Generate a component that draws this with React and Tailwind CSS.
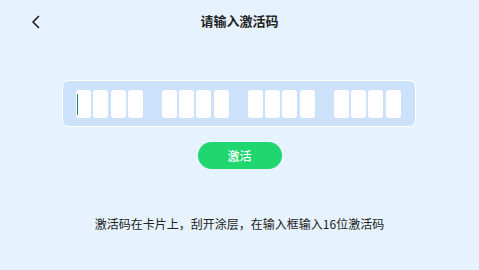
import React from "react";

const Box = ({ cursor }) => (
  <div className="relative w-[15px] h-[28px] rounded-[3px] bg-white">
    {cursor && <div className="absolute left-[0.5px] top-[4px] w-[1.5px] h-[21px] bg-[#168a78]" />}
  </div>
);

const Group = ({ first }) => (
  <div className="flex gap-[2.3px]">
    <Box cursor={first} />
    <Box />
    <Box />
    <Box />
  </div>
);

export default function App() {
  return (
    <div
      className="w-[479px] h-[270px] bg-[#e6f2fe] flex flex-col items-center relative overflow-hidden"
      style={{ fontFamily: '"Noto Sans CJK SC", "Noto Sans", sans-serif' }}
    >
      <div className="w-full h-[42px] flex items-center justify-center relative">
        <svg className="absolute left-[31px] top-[15px]" width="10" height="14" viewBox="0 0 10 14" fill="none">
          <path d="M7.5 1.5 L2 7 L7.5 12.5" stroke="#222" strokeWidth="1.7" strokeLinecap="round" strokeLinejoin="round" />
        </svg>
        <span className="text-[13px] font-semibold text-[#222] leading-none mt-[-1px]">请输入激活码</span>
      </div>
      <div className="mt-[38px] w-[354px] h-[47px] ml-[-1px] rounded-[7px] border border-white bg-[#cce2fa] flex items-center pl-[13px] gap-[19px]">
        <Group first />
        <Group />
        <Group />
        <Group />
      </div>
      <div className="mt-[15px] w-[84px] h-[27px] rounded-full bg-[#1fd66f] flex items-center justify-center text-white text-[12px] font-medium leading-none">
        激活
      </div>
      <div className="mt-[49px] text-[12px] leading-none text-[#222]">
        激活码在卡片上，刮开涂层，在输入框输入16位激活码
      </div>
    </div>
  );
}
